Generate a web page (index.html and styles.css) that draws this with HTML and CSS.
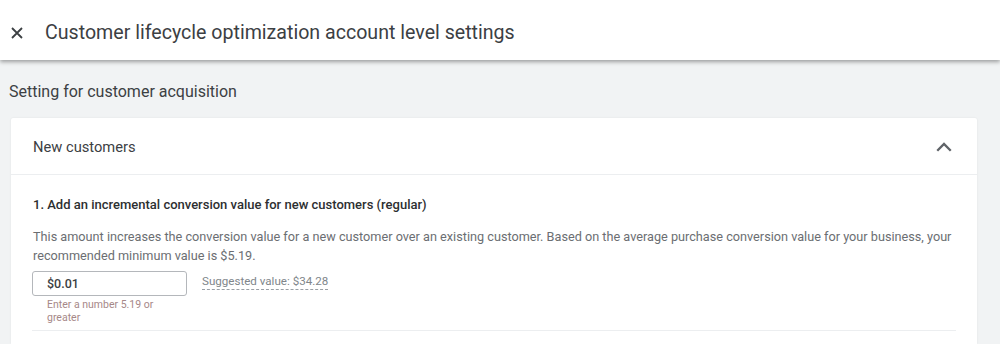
FILE: index.html
```html
<!DOCTYPE html>
<html lang="en">
<head>
<meta charset="utf-8">
<title>Customer lifecycle optimization account level settings</title>
<link rel="stylesheet" href="styles.css">
</head>
<body>
<header class="topbar">
  <span class="close" aria-label="Close">
    <svg width="14" height="14" viewBox="0 0 14 14"><path d="M2 2 L12 12 M12 2 L2 12" stroke="#3c4043" stroke-width="1.8" fill="none"/></svg>
  </span>
  <h1 class="title">Customer lifecycle optimization account level settings</h1>
</header>
<main class="panel">
  <h2 class="section-title">Setting for customer acquisition</h2>
  <section class="card">
    <div class="card-head">
      <span class="card-name">New customers</span>
      <svg class="chevron" width="24" height="24" viewBox="0 0 24 24"><path d="M6.6 15 L12 9.6 L17.4 15" stroke="#5f6368" stroke-width="1.9" fill="none"/></svg>
    </div>
    <div class="card-body">
      <div class="question">1. Add an incremental conversion value for new customers (regular)</div>
      <p class="desc">This amount increases the conversion value for a new customer over an existing customer. Based on the average purchase conversion value for your business, your recommended minimum value is $5.19.</p>
      <div class="field-row">
        <div class="field">
          <div class="input">$0.01</div>
          <div class="hint">Enter a number 5.19 or greater</div>
        </div>
        <span class="suggest">Suggested value: $34.28</span>
      </div>
      <div class="divider"></div>
    </div>
  </section>
</main>
</body>
</html>
```

FILE: styles.css
```css
html, body {
  margin: 0;
  padding: 0;
  background: #ffffff;
  font-family: Roboto, "Liberation Sans", Arial, sans-serif;
  color: #3c4043;
}

.topbar {
  position: relative;
  z-index: 2;
  height: 60px;
  display: flex;
  align-items: center;
  background: #ffffff;
  box-shadow: 0 2px 4px rgba(0, 0, 0, 0.35);
}

.close {
  display: flex;
  width: 14px;
  height: 14px;
  margin-left: 10px;
  margin-right: 21px;
  margin-top: 6px;
}

.title {
  margin: 5px 0 0 0;
  font-size: 19.6px;
  font-weight: 400;
  color: #3c4043;
}

.panel {
  background: #f1f3f4;
  height: 284px;
  padding: 0 23px 0 11px;
  overflow: hidden;
}

.section-title {
  margin: 0 0 0 -2px;
  height: 58px;
  line-height: 64px;
  font-size: 16px;
  font-weight: 400;
  color: #3c4043;
}

.card {
  background: #ffffff;
  border-radius: 2px 2px 0 0;
  box-shadow: 0 0 2px rgba(0, 0, 0, 0.08);
  height: 226px;
}

.card-head {
  height: 56px;
  display: flex;
  align-items: center;
  justify-content: space-between;
  padding: 0 18px 0 22px;
  border-bottom: 1px solid #eceef0;
}

.card-name {
  font-size: 14.7px;
  color: #3c4043;
  margin-top: 1px;
}

.chevron {
  margin-top: 1px;
  width: 30px;
  height: 30px;
}

.card-body {
  padding: 0 21px 0 21px;
}

.question {
  margin-top: 22px;
  font-size: 13px;
  font-weight: 500;
  color: #2d2f31;
  line-height: 16px;
  padding-left: 1px;
}

.desc {
  margin: 14px -6px 0 1px;
  font-size: 12.7px;
  line-height: 19px;
  color: #6b6e72;
}

.field-row {
  display: flex;
  align-items: flex-start;
  margin-top: 6px;
}

.field {
  width: 155px;
}

.input {
  box-sizing: border-box;
  height: 25px;
  border: 1px solid #b4b7bb;
  border-radius: 3px;
  padding-left: 14px;
  font-size: 12.5px;
  font-weight: 500;
  line-height: 23px;
  color: #3c4043;
}

.hint {
  margin-top: 2px;
  padding-left: 15px;
  width: 115px;
  font-size: 10.5px;
  line-height: 13px;
  color: #a68888;
}

.suggest {
  margin-left: 15px;
  margin-top: 3px;
  font-size: 11.6px;
  color: #80868b;
  line-height: 15px;
  border-bottom: 1px dashed #9aa0a6;
}

.divider {
  margin-top: 6px;
  height: 1px;
  background: #eceef0;
}
```
